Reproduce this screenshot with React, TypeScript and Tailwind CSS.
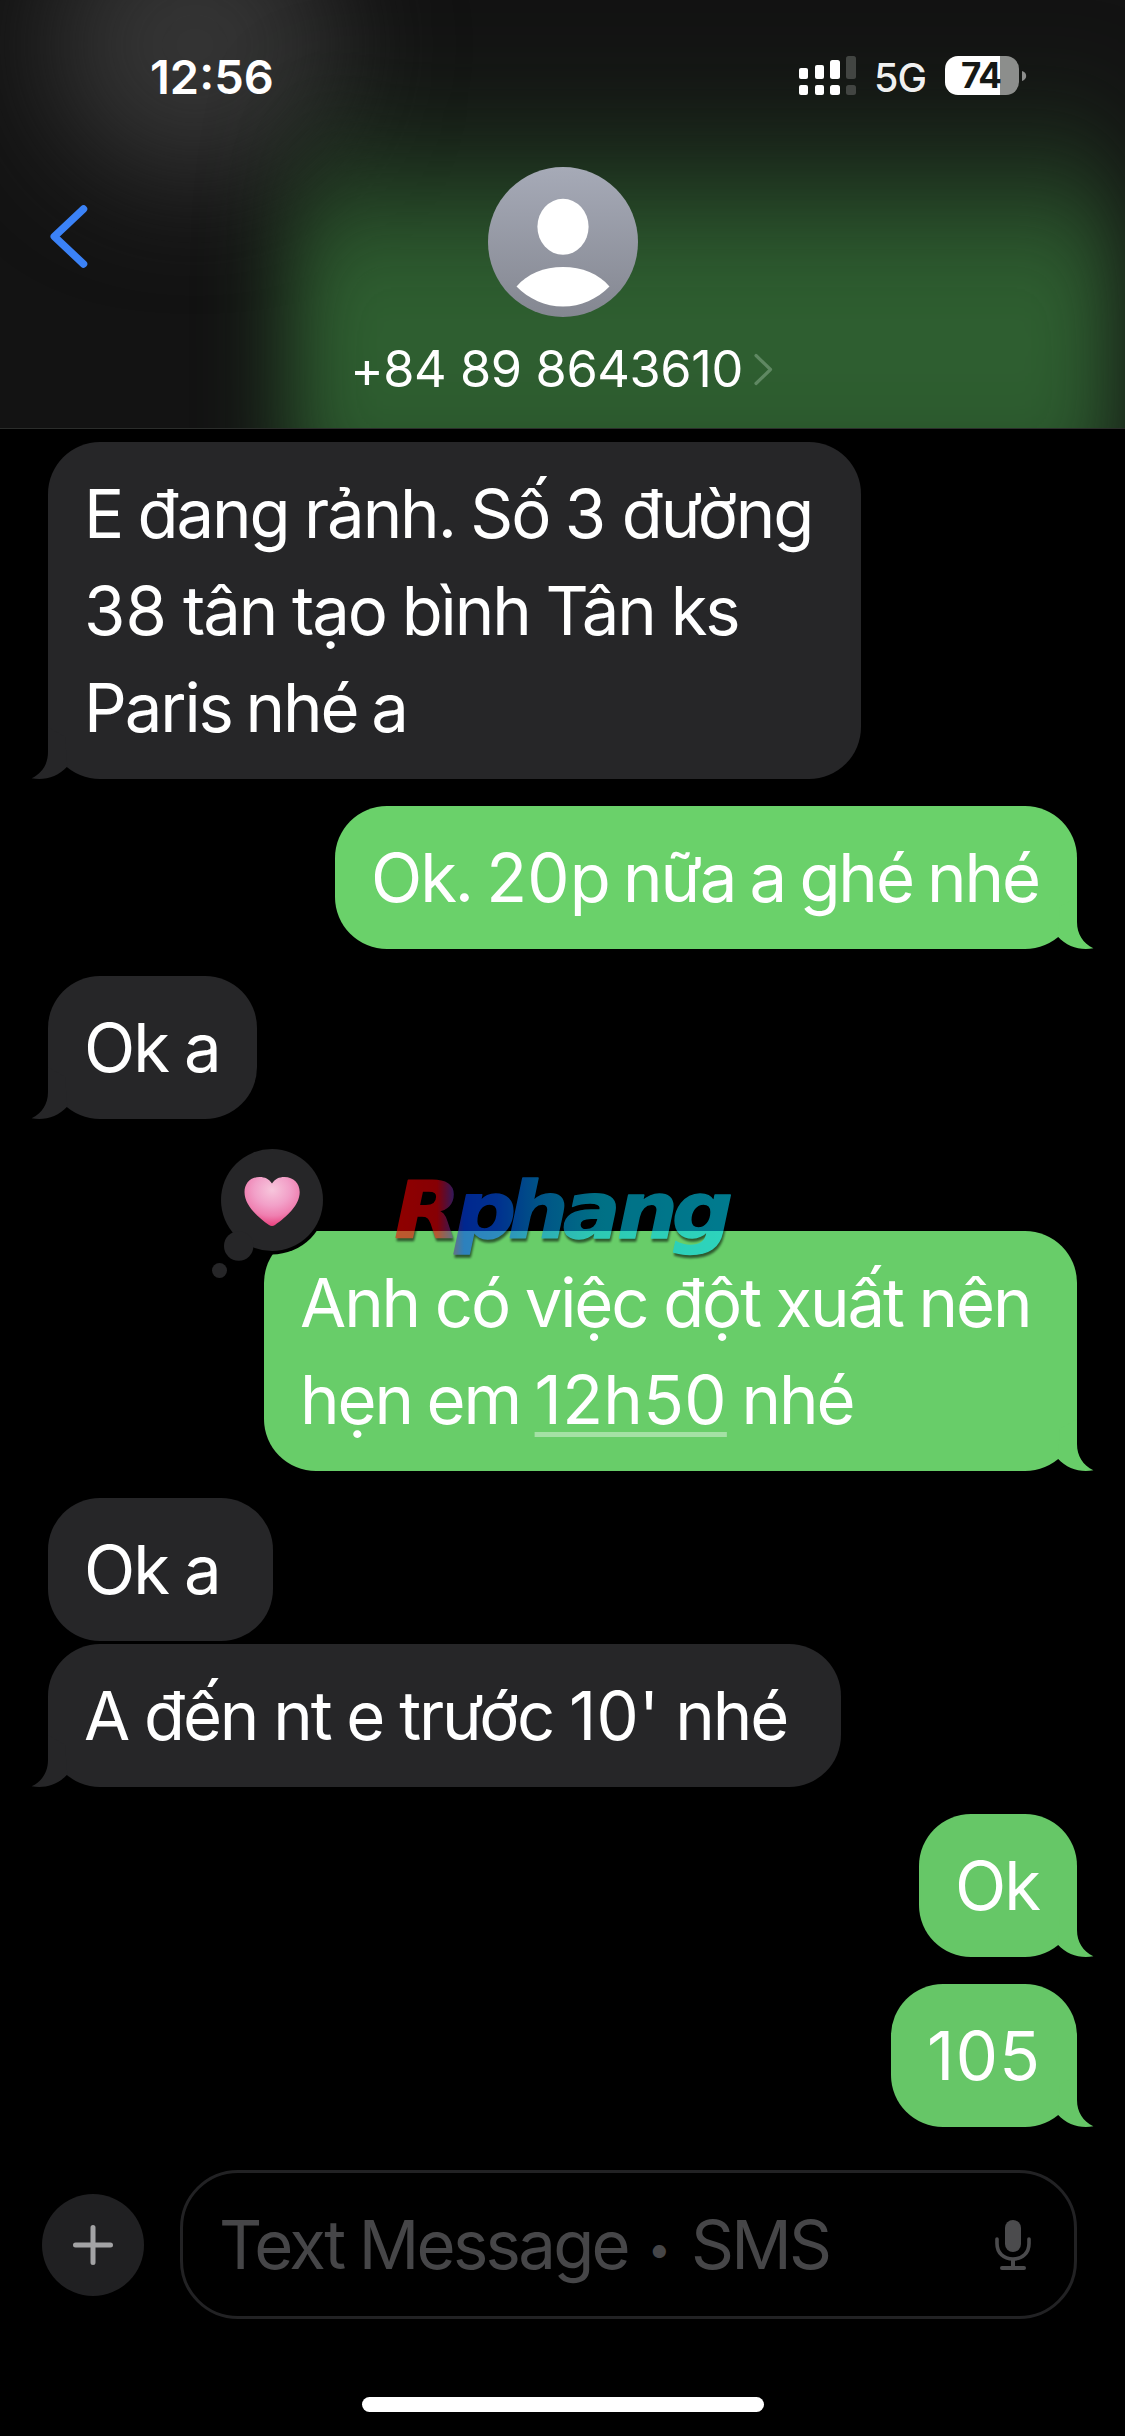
import type { ReactNode } from "react";

function Tail({ side }: { side: "left" | "right" }) {
  return (
    <svg
      viewBox="0 0 40 52"
      className={
        side === "left"
          ? "absolute bottom-0 -left-[17px] h-[52px] w-[40px]"
          : "absolute bottom-0 -right-[17px] h-[52px] w-[40px] -scale-x-100"
      }
      fill="currentColor"
    >
      <path d="M17 0V25C17 37 11 46.500 .6 51.300C14 53.500 26.500 50 36.300 39.500L34 10Z" />
    </svg>
  );
}

type BubbleProps = {
  side: "left" | "right";
  tail?: boolean;
  className: string;
  children: ReactNode;
};

function Bubble({ side, tail = true, className, children }: BubbleProps) {
  return (
    <div
      className={`relative rounded-[52px] bg-current py-[23px] pl-[36px] ${
        side === "left" ? "self-start text-[#262628]" : "self-end"
      } ${className}`}
    >
      {tail && <Tail side={side} />}
      <div className="relative whitespace-nowrap text-[67px] leading-[97px] tracking-[-2.100px] text-white">
        {children}
      </div>
    </div>
  );
}

function Num({ children }: { children: ReactNode }) {
  return <span className="tracking-[0.200px]">{children}</span>;
}

function StatusBar() {
  return (
    <div className="relative flex h-[150px] items-start justify-between pl-[150px] pr-[98px] pt-[48px]">
      <span className="text-[47px] font-semibold leading-[58px] tracking-[0px]">12:56</span>
      <div className="flex items-start pt-[8px]">
        <svg viewBox="0 0 57 39" className="h-[39px] w-[57px]" fill="#fff">
          <rect x="0" y="12" width="9" height="11" rx="2" />
          <rect x="16" y="9" width="9" height="14" rx="2" />
          <rect x="31" y="4" width="10" height="19" rx="2.500" />
          <rect x="47" y="0" width="10" height="23" rx="2.500" fill="#424542" />
          <rect x="0" y="29" width="9" height="10" rx="2" />
          <rect x="16" y="29" width="9" height="10" rx="2" />
          <rect x="31" y="29" width="10" height="10" rx="2.500" />
          <rect x="47" y="29" width="10" height="10" rx="2.500" fill="#424542" />
        </svg>
        <span className="ml-[18px] w-[71px] text-[39.500px] font-medium leading-[45px] tracking-[-1px] text-white/95">
          5G
        </span>
        <div className="flex h-[39px] w-[74px] items-center rounded-[13px] bg-[linear-gradient(90deg,#fff_55px,#8c8e8c_55px)] pl-[16px]">
          <span className="text-[35px] font-bold leading-[39px] tracking-[-1px] text-[#151815]">74</span>
        </div>
        <svg viewBox="0 0 6 12" className="ml-[3px] mt-[14px] h-[12px] w-[5px]" fill="#8c8e8c">
          <path d="M0 0C3 1 5 3 5 6S3 11 0 12Z" />
        </svg>
      </div>
    </div>
  );
}

function Header() {
  return (
    <header className="relative h-[429px] shrink-0 overflow-hidden border-b border-[#2b2d2b] bg-[#131313]">
      <div className="absolute -top-[90px] left-[50px] h-[270px] w-[290px] rounded-full bg-[#343434] blur-[58px]" />
      <div className="absolute left-[290px] top-[60px] h-[440px] w-[828px] bg-[linear-gradient(180deg,#2e5e3000_0px,#2b572d1c_40px,#2b572d38_75px,#2b572d6e_115px,#2e5e30b4_150px,#2e5e30_215px,#2f6031_280px,#2b582d_420px)] blur-[42px]" />
      <StatusBar />
      <svg
        viewBox="0 0 46 72"
        className="absolute left-[46px] top-[200px] h-[72px] w-[46px]"
        fill="none"
        stroke="#3b82f7"
        strokeWidth="7.500"
        strokeLinecap="round"
        strokeLinejoin="round"
      >
        <path d="M37.500 9L8.300 36.500L37.500 64" />
      </svg>
      <div className="relative mt-[17px] flex flex-col items-center">
        <svg viewBox="0 0 150 150" className="size-[150px]">
          <defs>
            <linearGradient id="avatar" x1="0" y1="0" x2="0" y2="1">
              <stop offset="0" stopColor="#a6aab7" />
              <stop offset="1" stopColor="#848791" />
            </linearGradient>
          </defs>
          <circle cx="75" cy="75" r="75" fill="url(#avatar)" />
          <ellipse cx="75" cy="59.800" rx="25.600" ry="28" fill="#fff" />
          <path d="M28.500 119.500C39 107 56 100 75 100S111 107 121.500 119.500C109 132 93 139.500 75 139.500S41 132 28.500 119.500Z" fill="#fff" />
        </svg>
        <div className="mt-[19px] flex items-center">
          <span className="text-[50.500px] leading-[66px] tracking-[-0.400px]">+84 89 8643610</span>
          <svg
            viewBox="0 0 22 36"
            className="ml-[10px] h-[36px] w-[22px]"
            fill="none"
            stroke="#5f8862"
            strokeWidth="3.200"
            strokeLinecap="round"
            strokeLinejoin="round"
          >
            <path d="M3 4.500L17.500 18.500L3 32.500" />
          </svg>
        </div>
      </div>
    </header>
  );
}

function Reaction() {
  return (
    <svg viewBox="0 0 120 140" className="absolute -left-[58px] -top-[86px] h-[140px] w-[120px]">
      <defs>
        <radialGradient id="heart" cx=".5" cy=".26" r=".72">
          <stop offset="0" stopColor="#f7c6dc" />
          <stop offset=".45" stopColor="#f2a0c8" />
          <stop offset=".74" stopColor="#ef7fb0" />
          <stop offset="1" stopColor="#e94682" />
        </radialGradient>
      </defs>
      <circle cx="66" cy="55" r="54.500" fill="#000" />
      <g fill="#262628">
        <circle cx="66" cy="55" r="51" />
        <circle cx="32.700" cy="101" r="14.700" />
        <circle cx="13.500" cy="125.500" r="7.500" />
      </g>
      <path
        d="M66 38.500C63 34 59 32 53.500 32C44.500 32 38.500 38.500 38.500 47C38.500 60 51 71.500 63 80Q66 82 69 80C81 71.500 93.700 60 93.700 47C93.700 38.500 87.500 32 78.500 32C73 32 69 34 66 38.500Z"
        fill="url(#heart)"
      />
    </svg>
  );
}

function Watermark() {
  return (
    <svg
      viewBox="0 0 350 100"
      className="absolute left-[124px] -top-[66px] z-10 h-[100px] w-[350px] overflow-visible opacity-[.56] drop-shadow-[1px_3px_1px_#000000]"
    >
      <defs>
        <linearGradient id="brand" gradientUnits="userSpaceOnUse" x1="8" y1="0" x2="320" y2="0">
          <stop offset="0" stopColor="#ff0000" />
          <stop offset=".12" stopColor="#f00008" />
          <stop offset=".2" stopColor="#0046ff" />
          <stop offset=".3" stopColor="#0058ff" />
          <stop offset=".42" stopColor="#0094f0" />
          <stop offset=".6" stopColor="#00c8ee" />
          <stop offset="1" stopColor="#00dcff" />
        </linearGradient>
      </defs>
      <text
        y="73"
        x="6 62 111 162 212 263"
        transform="scale(1.08 1)"
        fill="url(#brand)"
        stroke="url(#brand)"
        strokeWidth="1.500"
        strokeLinejoin="round"
        fontFamily="DejaVu Sans, sans-serif"
        fontSize="79"
        fontWeight="700"
        fontStyle="italic"
      >
        Rphang
      </text>
    </svg>
  );
}

function Composer() {
  return (
    <footer className="mt-[43px] flex items-center pl-[42px] pr-[48px]">
      <div className="flex size-[102px] items-center justify-center rounded-full bg-[#202022]">
        <svg viewBox="0 0 40 40" className="size-[40px]" stroke="#a3a3a5" strokeWidth="5" strokeLinecap="round">
          <path d="M20 2.500V37.500M2.500 20H37.500" />
        </svg>
      </div>
      <div className="ml-[36px] flex h-[149px] w-[897px] items-center justify-between rounded-[58px] border-[3px] border-[#222224] pl-[36px] pr-[43px]">
        <span className="whitespace-nowrap text-[67px] leading-[97px] tracking-[-2.700px] text-[#464648] [word-spacing:-1px]">
          Text Message
          <span className="relative -top-[5px] inline-block w-[63px] text-center text-[42px] leading-none tracking-normal">
            •
          </span>
          SMS
        </span>
        <svg viewBox="0 0 36 50" className="h-[50px] w-[36px]" fill="none" stroke="#4b4b4d">
          <rect x="10" y="0" width="16" height="32" rx="8" fill="#4b4b4d" stroke="none" />
          <path d="M2 19V23.500C2 33 8.500 39 18 39S34 33 34 23.500V19" strokeWidth="3.600" strokeLinecap="round" />
          <path d="M18 39V48" strokeWidth="4" />
          <path d="M7 48H29" strokeWidth="4" strokeLinecap="round" />
        </svg>
      </div>
    </footer>
  );
}

export default function App() {
  return (
    <div className="flex h-[2436px] w-[1125px] flex-col overflow-hidden bg-black font-['Inter',sans-serif] text-white">
      <Header />
      <main className="flex flex-col px-[48px] pt-[13px]">
        <Bubble side="left" className="w-[813px]">
          <div className="[word-spacing:-1.300px]">
            E đang rảnh. Số <Num>3</Num> đường
          </div>
          <div className="[word-spacing:-0.900px]">
            <Num>38</Num> tân tạo bình Tân ks
          </div>
          <div className="[word-spacing:-3px]">Paris nhé a</div>
        </Bubble>
        <Bubble side="right" className="mt-[27px] w-[742px] text-[#6ad16a]">
          <div className="[word-spacing:-2.500px]">
            Ok. <Num>20</Num>p nữa a ghé nhé
          </div>
        </Bubble>
        <Bubble side="left" className="mt-[27px] w-[209px]">
          <div className="[word-spacing:-0.500px]">Ok a</div>
        </Bubble>
        <div className="relative mt-[112px] flex w-[813px] flex-col self-end">
          <Bubble side="right" className="w-[813px] text-[#68cd69]">
            <div className="[word-spacing:-1.100px]">Anh có việc đột xuất nên</div>
            <div className="[word-spacing:-2.200px]">
              hẹn em{" "}
              <span className="tracking-[0.300px] underline decoration-white/40 decoration-[5px] underline-offset-[8px] [text-decoration-skip-ink:none]">
                12h50
              </span>{" "}
              nhé
            </div>
          </Bubble>
          <Reaction />
          <Watermark />
        </div>
        <Bubble side="left" tail={false} className="mt-[27px] w-[225px]">
          <div className="[word-spacing:-0.500px]">Ok a</div>
        </Bubble>
        <Bubble side="left" className="mt-[3px] w-[793px]">
          <div className="[word-spacing:-0.900px]">
            A đến nt e trước <Num>10'</Num> nhé
          </div>
        </Bubble>
        <Bubble side="right" className="mt-[27px] w-[158px] text-[#66c767]">
          Ok
        </Bubble>
        <Bubble side="right" className="mt-[27px] w-[186px] text-[#66c667]">
          <div className="tracking-[1.400px]">105</div>
        </Bubble>
      </main>
      <Composer />
      <div className="mt-[78px] h-[15px] w-[402px] self-center rounded-full bg-white" />
    </div>
  );
}
